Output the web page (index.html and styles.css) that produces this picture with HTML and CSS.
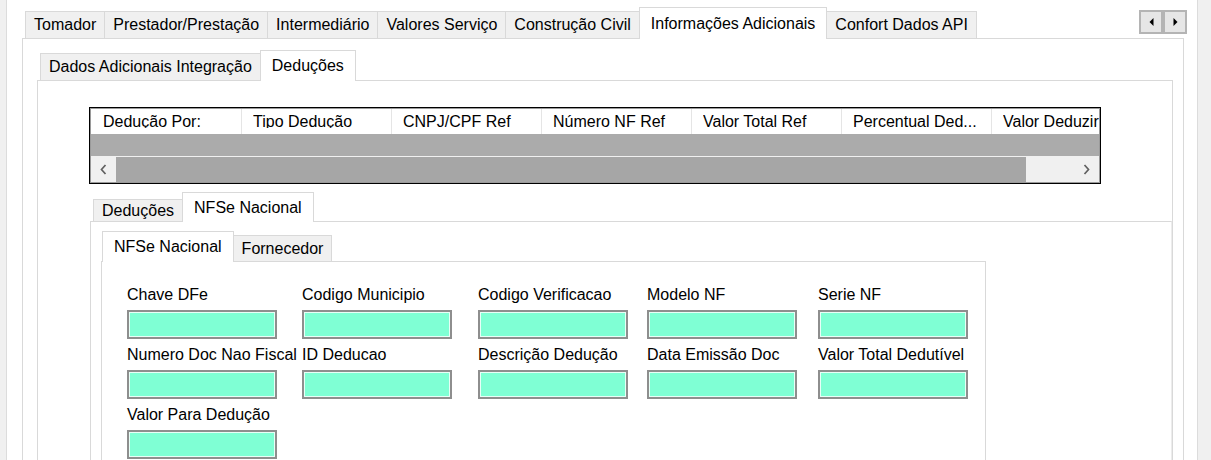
FILE: index.html
```html
<!DOCTYPE html>
<html lang="pt-BR">
<head>
<meta charset="utf-8">
<title>Informações Adicionais</title>
<link rel="stylesheet" href="styles.css">
</head>
<body>
<div class="window">
  <div class="edge-left"></div>
  <div class="main">
    <div class="tabctl l1">
      <div class="tabstrip">
        <div class="tab">Tomador</div>
        <div class="tab">Prestador/Prestação</div>
        <div class="tab">Intermediário</div>
        <div class="tab">Valores Serviço</div>
        <div class="tab">Construção Civil</div>
        <div class="tab active">Informações Adicionais</div>
        <div class="tab">Confort Dados API</div>
        <div class="strip-scroll">
          <div class="sbtn"><svg width="5" height="8" viewBox="0 0 5 8"><polygon points="4.5,0 0.5,4 4.5,8" fill="#000"/></svg></div>
          <div class="sbtn"><svg width="5" height="8" viewBox="0 0 5 8"><polygon points="0.5,0 4.5,4 0.5,8" fill="#000"/></svg></div>
        </div>
      </div>
      <div class="page">
        <div class="tabctl l2">
          <div class="tabstrip">
            <div class="tab">Dados Adicionais Integração</div>
            <div class="tab active">Deduções</div>
          </div>
          <div class="page">
            <div class="grid">
              <div class="grid-head">
                <div class="hcell"><span>Dedução Por:</span></div>
                <div class="hcell"><span>Tipo Dedução</span></div>
                <div class="hcell"><span>CNPJ/CPF Ref</span></div>
                <div class="hcell"><span>Número NF Ref</span></div>
                <div class="hcell"><span>Valor Total Ref</span></div>
                <div class="hcell"><span>Percentual Ded...</span></div>
                <div class="hcell"><span>Valor Deduzir</span></div>
              </div>
              <div class="grid-empty"></div>
              <div class="hscroll">
                <div class="sb-btn"><svg width="7" height="11" viewBox="0 0 7 11"><polyline points="5.5,1 1.5,5.5 5.5,10" fill="none" stroke="#606060" stroke-width="1.7"/></svg></div>
                <div class="sb-thumb"></div>
                <div class="sb-track"></div>
                <div class="sb-btn"><svg width="7" height="11" viewBox="0 0 7 11"><polyline points="1.5,1 5.5,5.5 1.5,10" fill="none" stroke="#606060" stroke-width="1.7"/></svg></div>
              </div>
            </div>
            <div class="tabctl l3">
              <div class="tabstrip">
                <div class="tab">Deduções</div>
                <div class="tab active">NFSe Nacional</div>
              </div>
              <div class="page">
                <div class="tabctl l4">
                  <div class="tabstrip">
                    <div class="tab active">NFSe Nacional</div>
                    <div class="tab">Fornecedor</div>
                  </div>
                  <div class="page">
                    <div class="fields">
                      <div class="field"><label>Chave DFe</label><div class="input"></div></div>
                      <div class="field"><label>Codigo Municipio</label><div class="input"></div></div>
                      <div class="field"><label>Codigo Verificacao</label><div class="input"></div></div>
                      <div class="field"><label>Modelo NF</label><div class="input"></div></div>
                      <div class="field"><label>Serie NF</label><div class="input"></div></div>
                      <div class="field"><label>Numero Doc Nao Fiscal</label><div class="input"></div></div>
                      <div class="field"><label>ID Deducao</label><div class="input"></div></div>
                      <div class="field"><label>Descrição Dedução</label><div class="input"></div></div>
                      <div class="field"><label>Data Emissão Doc</label><div class="input"></div></div>
                      <div class="field"><label>Valor Total Dedutível</label><div class="input"></div></div>
                      <div class="field"><label>Valor Para Dedução</label><div class="input"></div></div>
                    </div>
                  </div>
                </div>
              </div>
            </div>
          </div>
        </div>
      </div>
    </div>
  </div>
  <div class="edge-right"></div>
</div>
</body>
</html>
```

FILE: styles.css
```css
* { box-sizing: border-box; margin: 0; padding: 0; }
html, body { height: 460px; overflow: hidden; }
body {
  font-family: "Liberation Sans", Arial, sans-serif;
  font-size: 16px;
  color: #000;
  background: #f0f0f0;
}
.window { display: flex; height: 480px; }
.edge-left { width: 7px; flex: none; background: #f0f0f0; border-right: 1px solid #dcdcdc; }
.edge-right { width: 14px; flex: none; background: #f0f0f0; border-left: 1px solid #dcdcdc; }
.main {
  flex: 1;
  display: flex;
  flex-direction: column;
  background: #fff;
  padding: 7px 13px 0 15px;
}

/* generic tab control */
.tabctl { display: flex; flex-direction: column; flex: 1; }
.tabstrip { display: flex; align-items: flex-end; flex: none; }
.tab {
  display: flex;
  align-items: center;
  justify-content: center;
  padding: 0 8px;
  white-space: nowrap;
  background: #f0f0f0;
  border: 1px solid #d9d9d9;
  border-bottom: none;
  margin-left: -1px;
}
.tab:first-child { margin-left: 0; }
.tab.active {
  background: #fff;
  padding: 0 11px;
  margin-bottom: -1px;
  position: relative;
  z-index: 1;
}
.page {
  flex: 1;
  display: flex;
  flex-direction: column;
  background: #fff;
  border: 1px solid #d9d9d9;
}

/* level 1 */
.l1 > .tabstrip { height: 31px; padding-left: 3px; }
.l1 > .tabstrip > .tab { height: 27px; }
.l1 > .tabstrip > .tab.active { height: 32px; }
.l1 > .page { padding: 11px 10px 0 14px; }
.strip-scroll {
  margin-left: auto;
  margin-right: -3px;
  align-self: flex-start;
  margin-top: 3px;
  display: flex;
}
.sbtn {
  width: 24px;
  height: 24px;
  background: #e6e6e6;
  border: 2px solid #b4b4b4;
  display: flex;
  align-items: center;
  justify-content: center;
}

/* level 2 */
.l2 > .tabstrip { height: 30px; padding-left: 3px; }
.l2 > .tabstrip > .tab { height: 27px; }
.l2 > .tabstrip > .tab.active { height: 31px; }
.l2 > .page { padding: 26px 0 0 51px; }

/* data grid */
.grid {
  flex: none;
  width: 1012px;
  border: 1px solid #000;
  padding: 1px;
  background: #9a9a9a;
  display: flex;
  flex-direction: column;
}
.grid-head { display: flex; height: 25px; background: #fff; overflow: hidden; }
.hcell {
  flex: none;
  width: 150px;
  border-right: 1px solid #e5e5e5;
  padding: 6px 0 0 11px;
  white-space: nowrap;
  overflow: hidden;
}
.hcell:first-child { width: 151px; padding-left: 12px; }
.hcell span { display: block; height: 13px; line-height: 14px; overflow: hidden; }
.grid-empty { height: 22px; background: #ababab; }
.hscroll { height: 26px; display: flex; border-top: 1px solid #f0f0f0; background: #f0f0f0; }
.sb-btn { width: 25px; flex: none; display: flex; align-items: center; justify-content: center; background: #f0f0f0; }
.sb-thumb { width: 910px; flex: none; background: #a6a6a6; }
.sb-track { flex: 1; background: #f0f0f0; }

/* level 3 */
.l3 { margin: 8px 0 0 1px; }
.l3 > .tabstrip { height: 29px; padding-left: 3px; }
.l3 > .tabstrip > .tab { height: 22px; }
.l3 > .tabstrip > .tab.active { height: 30px; }
.l3 > .page { padding: 9px 0 0 10px; border-right-color: #ececec; }

/* level 4 */
.l4 { width: 885px; }
.l4 > .tabstrip { height: 30px; padding-left: 1px; }
.l4 > .tabstrip > .tab { height: 26px; }
.l4 > .tabstrip > .tab.active { height: 31px; }
.l4 > .page { padding: 24px 0 0 25px; }

/* fields */
.fields {
  display: grid;
  grid-template-columns: 175px 176px 169px 171px 150px;
  row-gap: 7px;
}
.field label { display: block; line-height: 18px; white-space: nowrap; }
.input {
  margin-top: 6px;
  width: 150px;
  height: 29px;
  background: #7fffd4;
  border: 2px solid #8e8e8e;
  box-shadow: inset 0 0 0 1px #e8fff7;
}
```
